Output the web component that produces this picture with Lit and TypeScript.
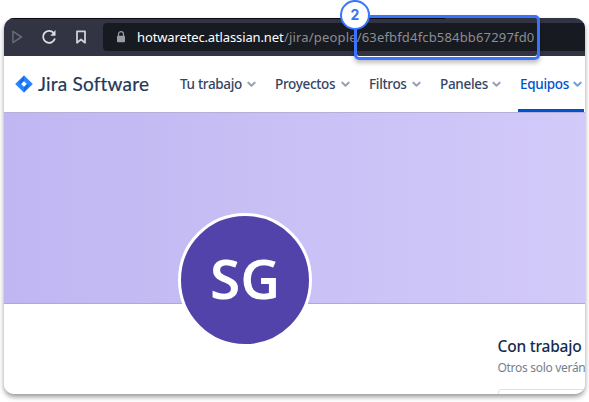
import { LitElement, html, css } from "lit";
import { customElement } from "lit/decorators.js";
import { classMap } from "lit/directives/class-map.js";

const chevron = html`<svg class="chevron" width="9" height="7" viewBox="0 0 9 7">
  <path d="M1.4 1.7 4.5 4.7 7.6 1.7" fill="none" stroke="currentColor" stroke-width="2.1" stroke-linecap="round" stroke-linejoin="round"/>
</svg>`;

@customElement("browser-bar")
export class BrowserBar extends LitElement {
  static styles = css`
    :host { display: flex; align-items: center; height: 38px; background: #323443; box-sizing: border-box; position: relative; }
    .edge { position: absolute; left: 0; top: 0; width: 441px; height: 1px; background: #0b0b10; }
    .tools { display: flex; width: 99px; flex: none; }
    .url { display: flex; align-items: center; flex: 1; height: 28px; background: #181a21; border-radius: 4px 0 0 4px; box-sizing: border-box; padding-left: 13px; font: 13px/28px "Noto Sans", "Open Sans", sans-serif; white-space: nowrap; }
    .lock { margin-right: 11px; flex: none; margin-top: -1px; }
    .host { color: #fff; flex: none; width: 147px; letter-spacing: -0.13px; }
    .path { color: #8c8d91; letter-spacing: 0.17px; }
  `;
  render() {
    return html`
      <div class="edge"></div>
      <svg class="tools" width="99" height="38" viewBox="0 0 99 38" fill="none" stroke-linejoin="round">
        <path d="M8.9 13.3v11.4l8.6-5.7z" stroke="#686a75" stroke-width="1.5"/>
        <path d="M49.6 14.8A6 6 0 1 0 50.9 20.5" stroke="#dedee1" stroke-width="1.8"/>
        <path d="M51.5 12v5.8h-5.2z" fill="#dedee1"/>
        <path d="M73 13.3h8v11.4l-4-3.2-4 3.2z" stroke="#d0d0d5" stroke-width="1.8"/>
      </svg>
      <div class="url">
        <svg class="lock" width="10" height="12" viewBox="0 0 10 12">
          <path d="M2.5 5V3.2a2.5 2.5 0 0 1 5 0V5" fill="none" stroke="#9b9ca3" stroke-width="1.2"/>
          <rect x="1" y="4.7" width="8" height="6.6" rx=".7" fill="#9b9ca3"/>
        </svg>
        <span class="host">hotwaretec.atlassian.net</span><span class="path">/jira/people/63efbfd4fcb584bb67297fd0</span>
      </div>`;
  }
}

@customElement("jira-nav")
export class JiraNav extends LitElement {
  static styles = css`
    :host { display: flex; height: 56px; background: #fff; color: #344563; font: 500 13.5px/56px "Noto Sans", "Open Sans", sans-serif; white-space: nowrap; }
    .logo { margin: 19px 5px 0 11px; flex: none; width: 18px; height: 18px; }
    .brand { width: 142px; flex: none; font: 400 19px/55px Lato, "Open Sans", sans-serif; color: #253858; letter-spacing: 0.2px; -webkit-text-stroke: 0.2px #253858; }
    .item { display: flex; align-items: center; justify-content: space-between; box-sizing: border-box; flex: none; height: 56px; padding-right: 19px; letter-spacing: -0.32px; }
    .w0 { width: 95px; } .w1 { width: 94px; } .w2 { width: 71px; } .w3 { width: 78px; } .w4 { width: 66px; }
    .w3 { padding-right: 17px; }
    .chevron { color: #9aa3b3; flex: none; margin-top: 1px; }
    .active { color: #0052cc; padding: 3px 2px 0; border-bottom: 3px solid #0052cc; line-height: 50px; }
    .active .chevron { color: #72a0e6; }
  `;
  items = ["Tu trabajo", "Proyectos", "Filtros", "Paneles", "Equipos"];
  render() {
    return html`
      <svg class="logo" viewBox="0 0 18 18">
        <path d="M9 .2 17.8 9 9 17.8.2 9z" fill="#2684ff"/>
        <path d="M9 1.4v4.3L5.6 9 4 7.2zM9 16.6v-4.3L12.4 9 14 10.8z" fill="#1769e0"/>
        <path d="M9 6.2 11.8 9 9 11.8 6.2 9z" fill="#fff"/>
      </svg>
      <span class="brand">Jira Software</span>
      ${this.items.map((t, i) => html`<div class=${classMap({ item: true, ["w" + i]: true, active: i === 4 })}><span>${t}</span>${chevron}</div>`)}`;
  }
}

@customElement("app-root")
export class AppRoot extends LitElement {
  static styles = css`
    :host { display: block; width: 589px; height: 402px; background: #fff; position: relative; overflow: hidden; padding: 18px 4px 8px; box-sizing: border-box; font-family: "Noto Sans", "Open Sans", sans-serif; }
    .card { width: 581px; height: 376px; border-radius: 10px; box-shadow: 0 3px 5px rgba(0, 0, 0, 0.4); }
    .clip { height: 376px; border-radius: 10px; overflow: hidden; background: #fff; position: relative; }
    .banner { height: 192px; box-sizing: border-box; background: linear-gradient(90deg, #c0b6f2, #d2caf9); border-top: 1px solid #b5b0d8; border-bottom: 1px solid #b1a7db; }
    .avatar { position: absolute; left: 174px; top: 195px; width: 128px; height: 128px; border: 3px solid #fff; border-radius: 50%; background: #5243aa; color: #fff; font-size: 55px; font-weight: 600; line-height: 123px; text-align: center; }
    .side { margin: 31px 0 0 493.5px; white-space: nowrap; color: #172b4d; }
    .title { font-size: 15.5px; font-weight: 500; line-height: 22px; letter-spacing: -0.2px; }
    .note { font-size: 12px; line-height: 21px; color: #75808f; letter-spacing: -0.3px; }
    .field { margin-top: 11px; height: 30px; width: 140px; box-sizing: border-box; border: 1px solid #dfe1e6; border-radius: 3px; }
    .mark { position: absolute; left: 354px; top: 15px; width: 186px; height: 45px; box-sizing: border-box; border: 3px solid #3874ff; border-radius: 5px; box-shadow: 0 3px 4px rgba(0, 0, 0, 0.25), inset 0 -1px 0 #fff; }
    .step { position: absolute; left: 340px; top: 0; width: 30px; height: 30px; box-sizing: border-box; border: 2px solid #3874ff; border-radius: 50%; background: #fff; color: #3d73ee; font: 700 14px/26px Inter, "Open Sans", sans-serif; text-align: center; }
  `;
  render() {
    return html`
      <div class="card"><div class="clip">
        <browser-bar></browser-bar>
        <jira-nav></jira-nav>
        <div class="banner"></div>
        <div class="side">
          <div class="title">Con trabajo</div>
          <div class="note">Otros solo verán</div>
          <div class="field"></div>
        </div>
        <div class="avatar">SG</div>
      </div></div>
      <div class="mark"></div>
      <div class="step">2</div>`;
  }
}
